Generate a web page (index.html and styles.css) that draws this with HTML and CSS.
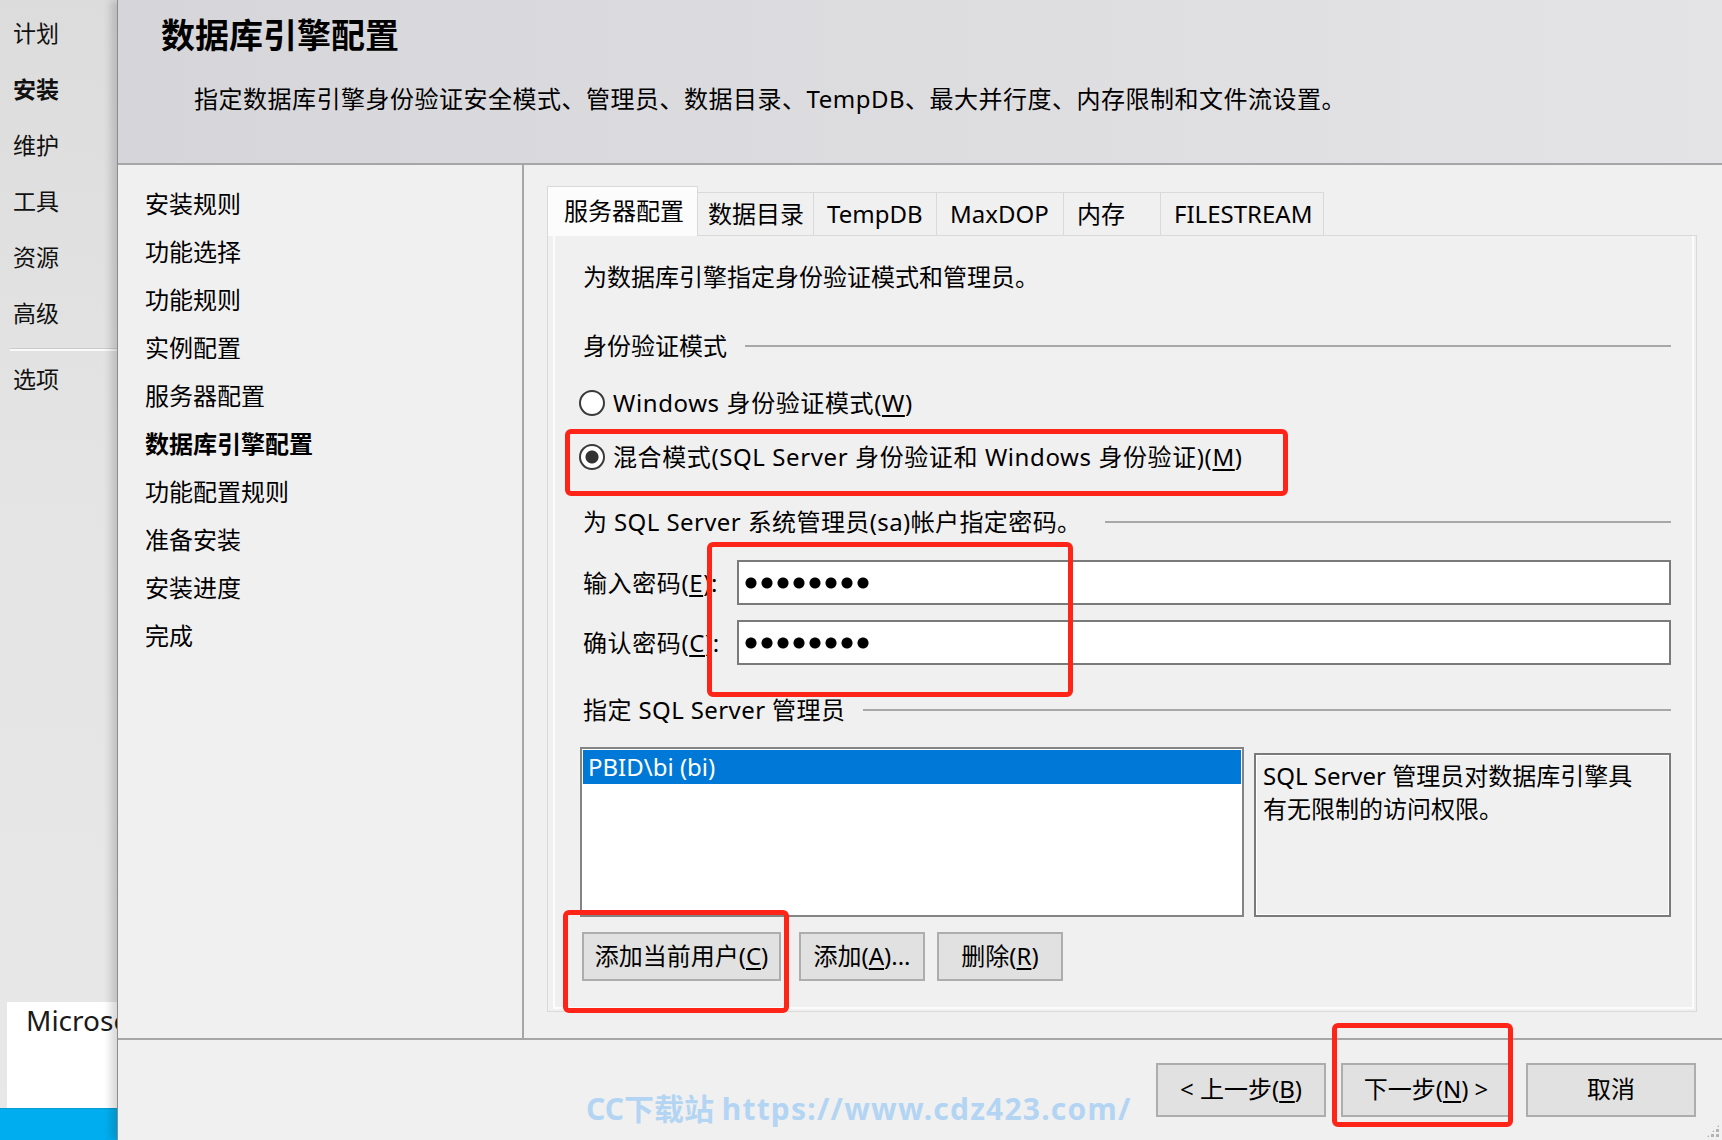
FILE: index.html
```html
<!doctype html>
<html>
    <head>
        <meta charset="utf-8" />
        <title>SQL Server 安装程序 - 数据库引擎配置</title>
        <link rel="stylesheet" href="styles.css">
    </head>
    <body>
        <div id="wrapper">
            <div id="nav">
                <ul class="nav-list">
                    <li>计划</li>
                    <li class="current">安装</li>
                    <li>维护</li>
                    <li>工具</li>
                    <li>资源</li>
                    <li>高级</li>
                </ul>
                <ul class="nav-list nav-options">
                    <li>选项</li>
                </ul>
                <div class="brand">Microsoft</div>
                <div class="taskbar"></div>
            </div>

            <div id="main">
                <div class="header">
                    <h1>数据库引擎配置</h1>
                    <p>指定数据库引擎身份验证安全模式、管理员、数据目录、TempDB、最大并行度、内存限制和文件流设置。</p>
                </div>

                <div class="body">
                    <ul class="steps">
                        <li>安装规则</li>
                        <li>功能选择</li>
                        <li>功能规则</li>
                        <li>实例配置</li>
                        <li>服务器配置</li>
                        <li class="current">数据库引擎配置</li>
                        <li>功能配置规则</li>
                        <li>准备安装</li>
                        <li>安装进度</li>
                        <li>完成</li>
                    </ul>

                    <div class="content">
                        <div class="tabs">
                            <div class="tab active">服务器配置</div>
                            <div class="tab">数据目录</div>
                            <div class="tab">TempDB</div>
                            <div class="tab">MaxDOP</div>
                            <div class="tab">内存</div>
                            <div class="tab">FILESTREAM</div>
                        </div>

                        <div class="tabpage">
                            <div class="page">
                                <p class="intro">为数据库引擎指定身份验证模式和管理员。</p>

                                <div class="group">身份验证模式</div>
                                <label class="option"><span class="radio"></span>Windows 身份验证模式(<u>W</u>)</label>
                                <label class="option"><span class="radio checked"></span>混合模式(SQL Server 身份验证和 Windows 身份验证)(<u>M</u>)</label>

                                <div class="group group-sa">为 SQL Server 系统管理员(sa)帐户指定密码。</div>
                                <div class="fields">
                                    <label>输入密码(<u>E</u>):</label>
                                    <div class="password"><span class="dots"></span></div>
                                    <label>确认密码(<u>C</u>):</label>
                                    <div class="password"><span class="dots"></span></div>
                                </div>

                                <div class="group group-admins">指定 SQL Server 管理员</div>
                                <div class="admins">
                                    <ul class="admin-list">
                                        <li class="selected">PBID\bi (bi)</li>
                                    </ul>
                                    <div class="admin-note">SQL Server 管理员对数据库引擎具<br />有无限制的访问权限。</div>
                                </div>

                                <div class="actions">
                                    <button class="btn btn-current">添加当前用户(<u>C</u>)</button>
                                    <button class="btn btn-add">添加(<u>A</u>)...</button>
                                    <button class="btn btn-remove">删除(<u>R</u>)</button>
                                </div>
                            </div>
                        </div>
                    </div>
                </div>

                <div class="footer">
                    <button class="btn">&lt; 上一步(<u>B</u>)</button>
                    <button class="btn">下一步(<u>N</u>) &gt;</button>
                    <button class="btn">取消</button>
                </div>
            </div>

            <div class="mark mark-mode"></div>
            <div class="mark mark-password"></div>
            <div class="mark mark-current"></div>
            <div class="mark mark-next"></div>

            <div class="watermark">CC下载站 <span>https://www.cdz423.com/</span></div>
            <div class="grip"></div>
        </div>
    </body>
</html>
```

FILE: styles.css
```css
* {
    margin: 0;
    padding: 0;
    box-sizing: border-box;
}

html, body {
    width: 1722px;
    height: 1140px;
    overflow: hidden;
}

body {
    background: #f0f0f0;
    color: #000;
    font-family: "Noto Sans", "Noto Sans CJK SC", sans-serif;
    font-size: 24px;
}

ul {
    list-style: none;
}

u {
    text-decoration: underline;
    text-decoration-thickness: 2px;
    text-underline-offset: 3px;
}

#wrapper {
    position: relative;
    display: flex;
    width: 1722px;
    height: 1140px;
}

/* left navigation of the installation center */

#nav {
    width: 117px;
    flex: none;
    display: flex;
    flex-direction: column;
    background: linear-gradient(#dcdcdc, #e4e4e4 40%, #e8e8e8);
}

.nav-list {
    padding: 5px 0 0 13px;
    font-size: 23px;
    color: #111;
}

.nav-list li {
    line-height: 56px;
}

.nav-list .current {
    font-weight: bold;
}

.nav-options {
    margin: 8px 0 0 10px;
    padding: 0 0 0 3px;
    border-top: 2px solid #fafafa;
    box-shadow: 0 -1px 0 #cbcbcb;
}

/* the text runs on under the setup window, which covers it */
.brand {
    margin: auto 0 0 7px;
    height: 106px;
    padding: 2px 0 0 19px;
    background: #fff;
    font-size: 28px;
    line-height: 32px;
    color: #1a1a1a;
    white-space: nowrap;
}

.taskbar {
    height: 32px;
    background: #00aeef;
    border-top: 1px solid #0a9bd2;
}

/* setup window */

#main {
    position: relative;
    z-index: 1;
    flex: 1;
    display: flex;
    flex-direction: column;
    border-left: 1px solid #8c8c8c;
    box-shadow: -6px 0 8px rgba(0, 0, 0, 0.16);
    background: #f0f0f0;
}

.header {
    height: 165px;
    flex: none;
    padding: 13px 0 0 43px;
    border-bottom: 2px solid #a6a6a6;
    background: linear-gradient(to right, #d6d6da, #e4e4e6);
}

.header h1 {
    font-size: 34px;
    line-height: 44px;
    font-weight: bold;
}

.header p {
    margin: 26px 0 0 33px;
    line-height: 32px;
    letter-spacing: 0.5px;
}

.body {
    height: 873px;
    flex: none;
    display: flex;
}

.steps {
    width: 406px;
    flex: none;
    padding: 15px 0 0 27px;
    border-right: 2px solid #a6a6a6;
}

.steps li {
    line-height: 48px;
}

.steps .current {
    font-weight: bold;
}

.content {
    flex: 1;
    display: flex;
    flex-direction: column;
    padding: 21px 25px 26px 23px;
}

/* tabs */

.tabs {
    position: relative;
    z-index: 1;
    display: flex;
    align-items: flex-end;
    height: 49px;
    flex: none;
}

.tab {
    height: 43px;
    margin-left: -1px;
    padding-left: 13px;
    line-height: 42px;
    border: 1px solid #d9d9d9;
    border-bottom: none;
    background: #f0f0f0;
    white-space: nowrap;
}

.tab.active {
    width: 151px;
    height: 50px;
    margin: 0 0 -1px 0;
    padding-left: 16px;
    line-height: 47px;
    background: #fcfcfc;
}

.tab:nth-child(2) { width: 117px; padding-left: 10px; }
.tab:nth-child(3) { width: 124px; }
.tab:nth-child(4) { width: 128px; }
.tab:nth-child(5) { width: 98px; }
.tab:nth-child(6) { width: 164px; }

.tabpage {
    flex: 1;
    display: flex;
    padding: 0 2px 2px 5px;
    border: 1px solid #d9d9d9;
}

.page {
    flex: 1;
    padding: 26px 21px 0 28px;
    border: 2px solid #fcfcfc;
    border-top: none;
}

.intro {
    line-height: 30px;
}

.group {
    display: flex;
    align-items: center;
    margin-top: 39px;
    line-height: 30px;
    white-space: nowrap;
}

.group::after {
    content: "";
    flex: 1;
    height: 2px;
    margin-left: 18px;
    background: #a8a8a8;
}

.group-sa {
    margin-top: 35px;
    letter-spacing: 0.4px;
}

.group-sa::after {
    margin-left: 24px;
}

.group-admins {
    margin-top: 30px;
    letter-spacing: 0.4px;
}

.option {
    display: flex;
    align-items: center;
    margin-top: 27px;
    line-height: 30px;
    letter-spacing: 0.6px;
}

.option + .option {
    margin-top: 24px;
}

.radio {
    width: 26px;
    height: 26px;
    margin: 0 8px 0 -4px;
    border: 2px solid #3a3a3a;
    border-radius: 50%;
    background: #fff;
}

.radio.checked {
    background: radial-gradient(circle, #333 6px, #fff 7px);
}

.fields {
    display: grid;
    grid-template-columns: 154px 1fr;
    row-gap: 15px;
    align-items: center;
    margin-top: 23px;
}

.fields label {
    line-height: 30px;
    letter-spacing: 0.6px;
}

.password {
    height: 45px;
    display: flex;
    align-items: center;
    border: 2px solid #7a7a7a;
    background: #fff;
}

.dots {
    width: 128px;
    height: 12px;
    margin-left: 4px;
    background: radial-gradient(circle, #000 5px, transparent 6px) 0 0 / 16px 12px repeat-x;
}

.admins {
    display: flex;
    height: 170px;
    margin: 22px 0 0 -3px;
}

.admin-list {
    width: 664px;
    flex: none;
    padding: 1px;
    border: 2px solid #848484;
    background: #fff;
}

.admin-list .selected {
    height: 34px;
    padding-left: 5px;
    line-height: 34px;
    background: #0078d7;
    color: #fff;
}

.admin-note {
    flex: 1;
    margin: 6px 0 0 10px;
    padding: 4px 0 0 7px;
    border: 2px solid #7a7a7a;
    box-shadow: inset 0 0 0 1px #fff;
    line-height: 33px;
    white-space: nowrap;
}

.actions {
    display: flex;
    margin: 15px 0 0 -1px;
}

.btn {
    height: 49px;
    padding: 0 0 5px;
    border: 2px solid #adadad;
    background: #e1e1e1;
    color: #000;
    font: inherit;
    white-space: nowrap;
}

.btn-current { width: 199px; }
.btn-add { width: 126px; margin-left: 18px; }
.btn-remove { width: 126px; margin-left: 12px; }

.footer {
    flex: 1;
    display: flex;
    justify-content: flex-end;
    gap: 15px;
    padding: 23px 26px 0 0;
    border-top: 2px solid #a6a6a6;
}

.footer .btn {
    width: 170px;
    height: 54px;
    padding-bottom: 6px;
}

/* annotations drawn over the screenshot */

.mark {
    position: absolute;
    z-index: 2;
    border: 5px solid #ff2418;
    border-radius: 6px;
}

.mark-mode { left: 565px; top: 429px; width: 723px; height: 67px; }
.mark-password { left: 707px; top: 542px; width: 366px; height: 155px; }
.mark-current { left: 563px; top: 910px; width: 226px; height: 103px; }
.mark-next { left: 1332px; top: 1023px; width: 181px; height: 104px; }

.watermark {
    position: absolute;
    z-index: 2;
    left: 586px;
    top: 1092px;
    font-size: 30px;
    line-height: 34px;
    font-weight: bold;
    color: #b3d5f3;
    white-space: nowrap;
}

.watermark span {
    letter-spacing: 1.2px;
}

.grip {
    position: absolute;
    z-index: 2;
    right: 1px;
    bottom: 1px;
    width: 16px;
    height: 16px;
    background: radial-gradient(circle, #b4b4b4 1.5px, transparent 2px) 0 0 / 5px 5px;
    clip-path: polygon(100% 0, 100% 100%, 0 100%);
}
```
